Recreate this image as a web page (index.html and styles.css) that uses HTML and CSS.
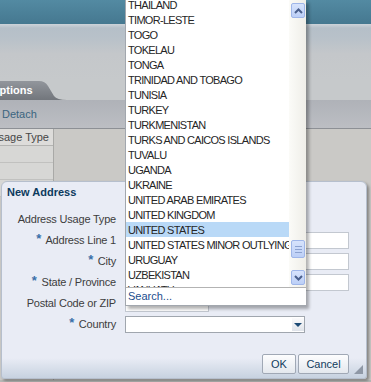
FILE: index.html
```html
<!DOCTYPE html>
<html lang="en">
<head>
  <meta charset="UTF-8">
  <title>New Address</title>
<link rel="stylesheet" href="styles.css">
</head>
<body>

<div class="app">
  <div class="brand"></div>
  <div class="shelf"></div>
  <div class="tabs"><span class="tab">Options</span></div>
  <div class="toolbar"><span class="toolbar_btn">Detach</span></div>
  <div class="table">
    <div class="table_col">
      <div class="table_head"><span>Address Usage Type</span></div>
      <div class="table_cell"></div>
      <div class="table_cell"></div>
      <div class="table_cell"></div>
    </div>
  </div>
</div>

<div class="dialog">
  <h3 class="dialog_title">New Address</h3>
  <form class="form">
    <label class="form_label">Address Usage Type</label>
    <div class="form_field"><span class="select"><span class="select_btn"></span></span></div>
    <label class="form_label"><i class="req">*</i> Address Line 1</label>
    <div class="form_field"><input type="text" class="input input-wide"></div>
    <label class="form_label"><i class="req">*</i> City</label>
    <div class="form_field"><input type="text" class="input input-wide"></div>
    <label class="form_label"><i class="req">*</i> State / Province</label>
    <div class="form_field"><input type="text" class="input input-wide"></div>
    <label class="form_label">Postal Code or ZIP</label>
    <div class="form_field"><input type="text" class="input input-short"></div>
    <label class="form_label"><i class="req">*</i> Country</label>
    <div class="form_field"><span class="select"><span class="select_btn"></span></span></div>
  </form>
  <div class="dialog_btns">
    <button type="button" class="btn btn-ok">OK</button>
    <button type="button" class="btn btn-cancel">Cancel</button>
  </div>
  <span class="dialog_grip"></span>
</div>

<div class="popup">
  <div class="popup_body">
    <ul class="popup_list">
      <li>THAILAND</li>
      <li>TIMOR-LESTE</li>
      <li>TOGO</li>
      <li>TOKELAU</li>
      <li>TONGA</li>
      <li>TRINIDAD AND TOBAGO</li>
      <li>TUNISIA</li>
      <li>TURKEY</li>
      <li>TURKMENISTAN</li>
      <li>TURKS AND CAICOS ISLANDS</li>
      <li>TUVALU</li>
      <li>UGANDA</li>
      <li>UKRAINE</li>
      <li>UNITED ARAB EMIRATES</li>
      <li>UNITED KINGDOM</li>
      <li class="is-selected">UNITED STATES</li>
      <li>UNITED STATES MINOR OUTLYING ISLANDS</li>
      <li>URUGUAY</li>
      <li>UZBEKISTAN</li>
      <li>VANUATU</li>
    </ul>
    <div class="scroll">
      <span class="scroll_btn">
        <svg width="9" height="6" viewBox="0 0 9 6"><polyline points="1,5 4.5,1.5 8,5" fill="none" stroke="#4a5f8c" stroke-width="2"/></svg>
      </span>
      <span class="scroll_thumb"><span class="scroll_grip"></span></span>
      <span class="scroll_btn scroll_btn-down">
        <svg width="9" height="6" viewBox="0 0 9 6"><polyline points="1,1 4.5,4.5 8,1" fill="none" stroke="#4a5f8c" stroke-width="2"/></svg>
      </span>
    </div>
  </div>
  <div class="popup_search">Search...</div>
</div>

</body>
</html>
```

FILE: styles.css
```css
body {
  margin: 0;
  width: 371px;
  height: 382px;
  overflow: hidden;
  position: relative;
  font-family: "Liberation Sans", Arial, sans-serif;
  font-size: 11px;
  background-color: #b7b8b6;
}
.app {
  height: 380px;
  display: flex;
  flex-direction: column;
}
.brand {
  height: 24px;
  background: linear-gradient(#538aa2, #457890);
}
.shelf {
  height: 56px;
  background: linear-gradient(#ccd3d9 0, #b5bfc8 4px, #b8c1c9 14px, #c4c7ca 30px, #c6c9cb 100%);
}
.tabs {
  height: 20px;
  display: flex;
  align-items: flex-end;
  background-color: #c6c9cb;
}
.tab {
  width: 76px;
  height: 19px;
  margin-left: -9px;
  line-height: 19px;
  font-weight: bold;
  color: #fff;
  background: linear-gradient(#92969c, #72767c);
  clip-path: path('M0 0H48Q54 0 57 5L63 15Q66 19 76 19H0Z');
}
.toolbar {
  height: 28px;
  line-height: 28px;
  padding-left: 2px;
  background: linear-gradient(#afb2b8, #bcbec3);
  border-bottom: 1px solid #8d9095;
}
.toolbar_btn {
  color: #3b6580;
}
.table {
  flex: 1;
  background-color: #cac9c6;
}
.table_col {
  width: 53px;
  border-right: 1px solid #a9a9a7;
  height: 100%;
}
.table_head {
  height: 16px;
  line-height: 16px;
  display: flex;
  justify-content: flex-end;
  padding-right: 4px;
  overflow: hidden;
  white-space: nowrap;
  color: #474747;
  background-color: #dddcda;
  border-bottom: 1px solid #b4b4b2;
}
.table_cell {
  height: 16px;
  background-color: #d7d7d5;
  border-bottom: 1px solid #c1c1bf;
}

.dialog {
  position: absolute;
  left: 1px;
  top: 181px;
  width: 364px;
  height: 196px;
  display: flex;
  flex-direction: column;
  border: 1px solid #b6bfcd;
  border-radius: 6px 6px 3px 3px;
  background: linear-gradient(#e9ecf5 0, #e9ecf5 176px, #c7d2e0 100%);
  box-shadow: 2px 2px 3px rgba(0, 0, 0, .35);
}
.dialog_title {
  margin: 0;
  padding: 3px 0 0 5px;
  line-height: 14px;
  font-size: 11px;
  color: #0c3a5d;
}
.form {
  margin-top: 9px;
  display: grid;
  grid-template-columns: 114px 1fr;
  grid-auto-rows: 21px;
  column-gap: 9px;
  align-items: center;
}
.form_label {
  text-align: right;
  letter-spacing: -.2px;
  line-height: 14px;
  color: #3d3d3d;
  white-space: nowrap;
}
.req {
  margin-right: 2px;
  font-style: normal;
  font-weight: bold;
  font-size: 13px;
  line-height: 10px;
  vertical-align: 1px;
  color: #3a6fa8;
}
.form_field {
  display: flex;
  align-items: center;
}
.input {
  display: block;
  height: 17px;
  box-sizing: border-box;
  margin: 1px 0 0;
  padding: 0 2px;
  border: 1px solid #c3c8d0;
  background-color: #fff;
  font: inherit;
}
.input-wide {
  width: 224px;
}
.input-short {
  width: 84px;
}
.select {
  display: flex;
  width: 180px;
  height: 17px;
  box-sizing: border-box;
  margin-top: 1px;
  border: 1px solid #a0a6ae;
  background-color: #fff;
}
.select_btn {
  width: 12px;
  height: 13px;
  margin: 1px 0 1px auto;
  position: relative;
  background: linear-gradient(#fbfbfc, #dfe3ea);
}
.select_btn::after {
  content: "";
  position: absolute;
  left: 2px;
  top: 5px;
  border-style: solid;
  border-width: 4px 4px 0;
  border-color: #1c4a75 transparent transparent;
}
.dialog_btns {
  margin-top: auto;
  display: flex;
  justify-content: flex-end;
  gap: 2px;
  padding: 0 17px 4px 0;
}
.btn {
  height: 20px;
  padding: 0;
  font: inherit;
  font-size: 11px;
  color: #123b5d;
  border: 1px solid #a0a8b5;
  border-radius: 2px;
  background: linear-gradient(#fdfdfe, #e4e8ee);
}
.btn-ok {
  width: 34px;
}
.btn-cancel {
  width: 51px;
}
.dialog_grip {
  position: absolute;
  right: 3px;
  bottom: 4px;
  width: 9px;
  height: 9px;
  background-image: radial-gradient(circle, #8f98a6 0.8px, transparent 1px);
  background-size: 2px 2px;
  clip-path: polygon(100% 0, 100% 100%, 0 100%);
}

.popup {
  position: absolute;
  left: 125px;
  top: 0;
  width: 180px;
  border-left: 1px solid #a2a7ae;
  border-bottom: 1px solid #a2a7ae;
  background-color: #fff;
  box-shadow: 3px 3px 3px rgba(0, 0, 0, .3);
}
.popup_body {
  height: 287px;
  display: flex;
}
.popup_list {
  flex: 1;
  min-width: 0;
  margin: 0;
  padding: 0;
  list-style: none;
  overflow: hidden;
}
.popup_list li {
  height: 15px;
  box-sizing: border-box;
  padding: 1px 0 0 2px;
  line-height: 14px;
  letter-spacing: -.7px;
  color: #262626;
  white-space: nowrap;
  overflow: hidden;
}
.popup_list li:first-child {
  margin-top: -3px;
}
.popup_list li.is-selected {
  background-color: #b9d9f7;
}
.scroll {
  width: 17px;
  box-sizing: border-box;
  padding: 3px 1px 0 2px;
  display: flex;
  flex-direction: column;
  background: linear-gradient(to right, #fbfbf8, #efeee8);
}
.scroll_btn,
.scroll_thumb {
  display: flex;
  align-items: center;
  justify-content: center;
  width: 14px;
  height: 15px;
  box-sizing: border-box;
  border: 1px solid #9fb6e9;
  border-radius: 2px;
  background: linear-gradient(#d7e3fc, #bccff7);
}
.scroll_thumb {
  height: 18px;
  margin-top: 222px;
}
.scroll_btn-down {
  margin-top: 12px;
}
.scroll_grip {
  width: 7px;
  height: 7px;
  background: repeating-linear-gradient(#8ca2d0 0 1px, transparent 1px 3px);
}
.popup_search {
  height: 17px;
  line-height: 17px;
  padding-left: 2px;
  border-top: 1px solid #b3b3b3;
  color: #1b4e8e;
}
```
